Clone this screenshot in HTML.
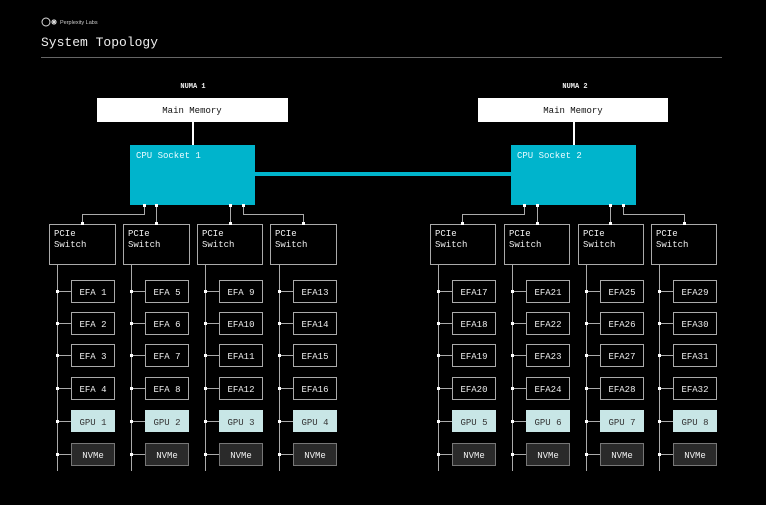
<!DOCTYPE html><html><head><style>body{margin:0;background:#000;width:766px;height:500px;overflow:hidden}text{font-family:"Liberation Mono",monospace}</style></head><body>
<svg width="766" height="500" xmlns="http://www.w3.org/2000/svg">
<rect width="766" height="500" fill="#000"/>
<circle cx="46" cy="22" r="4" fill="none" stroke="#ddd" stroke-width="1"/>
<g stroke="#ddd" stroke-width="1"><line x1="51" y1="22" x2="57" y2="22"/><line x1="54" y1="19" x2="54" y2="25"/><line x1="52" y1="20" x2="56" y2="24"/><line x1="56" y1="20" x2="52" y2="24"/></g>
<text x="60" y="24" font-size="5.5" fill="#ccc" style="font-family:'Liberation Sans',sans-serif">Perplexity Labs</text>
<text x="41" y="46" font-size="13" fill="#eee">System Topology</text>
<line x1="41" y1="57.5" x2="722" y2="57.5" stroke="#666"/>
<text x="193" y="88" font-size="7" font-weight="bold" fill="#eee" text-anchor="middle">NUMA 1</text>
<text x="575" y="88" font-size="7" font-weight="bold" fill="#eee" text-anchor="middle">NUMA 2</text>
<rect x="97" y="98" width="191" height="24" fill="#fff"/>
<rect x="478" y="98" width="190" height="24" fill="#fff"/>
<text x="192" y="113" font-size="9" fill="#111" text-anchor="middle">Main Memory</text>
<text x="573" y="113" font-size="9" fill="#111" text-anchor="middle">Main Memory</text>
<rect x="192" y="122" width="2" height="23" fill="#fff"/>
<rect x="573" y="122" width="2" height="23" fill="#fff"/>
<rect x="255" y="172" width="256" height="4" fill="#00b4cc"/>
<rect x="130" y="145" width="125" height="60" fill="#00b4cc"/>
<rect x="511" y="145" width="125" height="60" fill="#00b4cc"/>
<text x="136" y="158" font-size="9" fill="#e8fbff">CPU Socket 1</text>
<text x="517" y="158" font-size="9" fill="#e8fbff">CPU Socket 2</text>
<g stroke="#aaa" stroke-width="1" fill="none">
<path d="M144.5 205V214.5H82.5V224M156.5 205V224M230.5 205V224M243.5 205V214.5H303.5V224"/>
<path d="M524.5 205V214.5H462.5V224M537.5 205V224M610.5 205V224M623.5 205V214.5H684.5V224"/>
<rect x="49.5" y="224.5" width="66" height="40"/><rect x="123.5" y="224.5" width="66" height="40"/><rect x="197.5" y="224.5" width="65" height="40"/><rect x="270.5" y="224.5" width="66" height="40"/>
<rect x="430.5" y="224.5" width="65" height="40"/><rect x="504.5" y="224.5" width="65" height="40"/><rect x="578.5" y="224.5" width="65" height="40"/><rect x="651.5" y="224.5" width="65" height="40"/>
<path d="M57.5 264V471M131.5 264V471M205.5 264V471M279.5 264V471M438.5 264V471M512.5 264V471M586.5 264V471M659.5 264V471"/>
</g>
<g fill="#fff"><rect x="143" y="204" width="3" height="3"/><rect x="155" y="204" width="3" height="3"/><rect x="229" y="204" width="3" height="3"/><rect x="242" y="204" width="3" height="3"/><rect x="81" y="222" width="3" height="3"/><rect x="155" y="222" width="3" height="3"/><rect x="229" y="222" width="3" height="3"/><rect x="302" y="222" width="3" height="3"/>
<rect x="523" y="204" width="3" height="3"/><rect x="536" y="204" width="3" height="3"/><rect x="609" y="204" width="3" height="3"/><rect x="622" y="204" width="3" height="3"/><rect x="461" y="222" width="3" height="3"/><rect x="536" y="222" width="3" height="3"/><rect x="609" y="222" width="3" height="3"/><rect x="683" y="222" width="3" height="3"/></g>
<g font-size="9" fill="#eee">
<text x="54" y="236">PCIe</text><text x="54" y="247">Switch</text>
<text x="128" y="236">PCIe</text><text x="128" y="247">Switch</text>
<text x="202" y="236">PCIe</text><text x="202" y="247">Switch</text>
<text x="275" y="236">PCIe</text><text x="275" y="247">Switch</text>
<text x="435" y="236">PCIe</text><text x="435" y="247">Switch</text>
<text x="509" y="236">PCIe</text><text x="509" y="247">Switch</text>
<text x="583" y="236">PCIe</text><text x="583" y="247">Switch</text>
<text x="656" y="236">PCIe</text><text x="656" y="247">Switch</text>
</g>
<defs>
<g id="col">
<g stroke="#aaa" fill="none"><path d="M0 291.5H14M0 323.5H14M0 355.5H14M0 388.5H14M0 421.5H14M0 454.5H14"/>
<rect x="14.5" y="280.5" width="43" height="22"/><rect x="14.5" y="312.5" width="43" height="22"/><rect x="14.5" y="344.5" width="43" height="22"/><rect x="14.5" y="377.5" width="43" height="22"/></g>
<rect x="14" y="410" width="44" height="22" fill="#c8e6e6"/>
<rect x="14.5" y="443.5" width="43" height="22" fill="#2a2a2a" stroke="#777"/>
<g fill="#fff"><rect x="-1" y="290" width="3" height="3"/><rect x="-1" y="322" width="3" height="3"/><rect x="-1" y="354" width="3" height="3"/><rect x="-1" y="387" width="3" height="3"/><rect x="-1" y="420" width="3" height="3"/><rect x="-1" y="453" width="3" height="3"/></g>
</g>
</defs>
<use href="#col" x="57"/><use href="#col" x="131"/><use href="#col" x="205"/><use href="#col" x="279"/>
<use href="#col" x="438"/><use href="#col" x="512"/><use href="#col" x="586"/><use href="#col" x="659"/>
<g font-size="9" fill="#eee" text-anchor="middle">
<text x="93" y="295">EFA 1</text><text x="93" y="327">EFA 2</text><text x="93" y="359">EFA 3</text><text x="93" y="392">EFA 4</text>
<text x="167" y="295">EFA 5</text><text x="167" y="327">EFA 6</text><text x="167" y="359">EFA 7</text><text x="167" y="392">EFA 8</text>
<text x="241" y="295">EFA 9</text><text x="241" y="327">EFA10</text><text x="241" y="359">EFA11</text><text x="241" y="392">EFA12</text>
<text x="315" y="295">EFA13</text><text x="315" y="327">EFA14</text><text x="315" y="359">EFA15</text><text x="315" y="392">EFA16</text>
<text x="474" y="295">EFA17</text><text x="474" y="327">EFA18</text><text x="474" y="359">EFA19</text><text x="474" y="392">EFA20</text>
<text x="548" y="295">EFA21</text><text x="548" y="327">EFA22</text><text x="548" y="359">EFA23</text><text x="548" y="392">EFA24</text>
<text x="622" y="295">EFA25</text><text x="622" y="327">EFA26</text><text x="622" y="359">EFA27</text><text x="622" y="392">EFA28</text>
<text x="695" y="295">EFA29</text><text x="695" y="327">EFA30</text><text x="695" y="359">EFA31</text><text x="695" y="392">EFA32</text>
<text x="93" y="458">NVMe</text><text x="167" y="458">NVMe</text><text x="241" y="458">NVMe</text><text x="315" y="458">NVMe</text>
<text x="474" y="458">NVMe</text><text x="548" y="458">NVMe</text><text x="622" y="458">NVMe</text><text x="695" y="458">NVMe</text>
</g>
<g font-size="9" fill="#333" text-anchor="middle">
<text x="93" y="425">GPU 1</text><text x="167" y="425">GPU 2</text><text x="241" y="425">GPU 3</text><text x="315" y="425">GPU 4</text>
<text x="474" y="425">GPU 5</text><text x="548" y="425">GPU 6</text><text x="622" y="425">GPU 7</text><text x="695" y="425">GPU 8</text>
</g>
</svg>
</body></html>
